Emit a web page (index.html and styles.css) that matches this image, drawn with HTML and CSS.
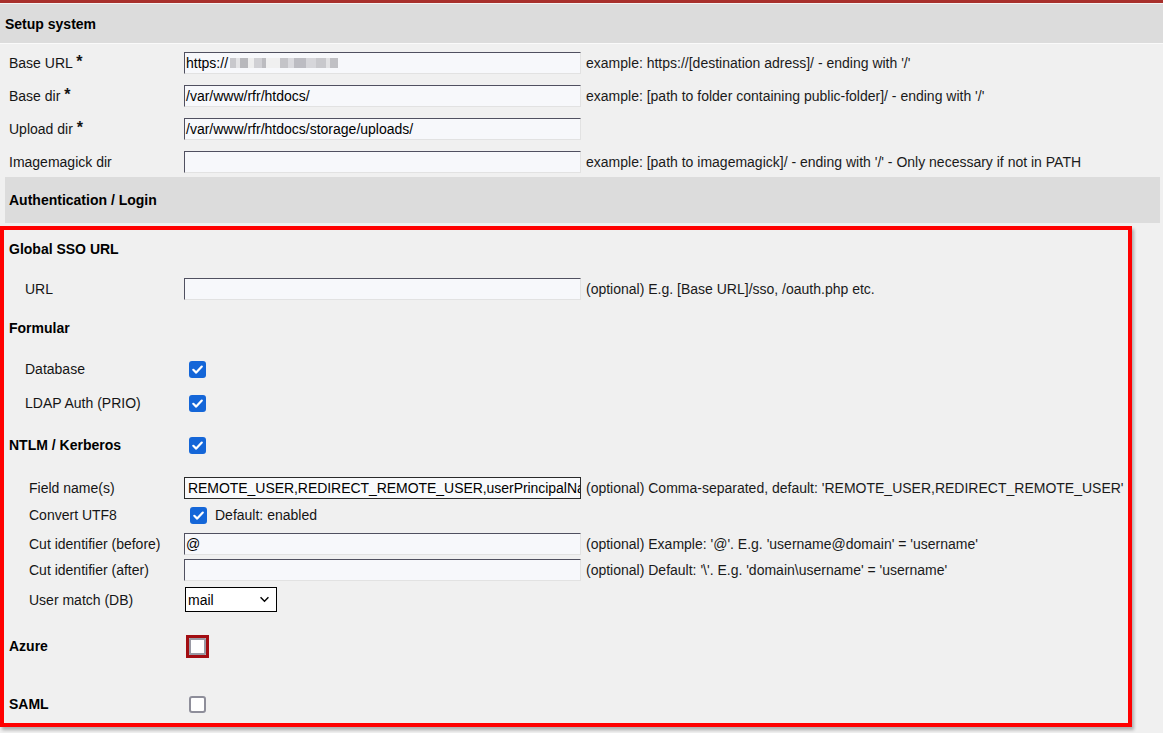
FILE: index.html
```html
<!DOCTYPE html>
<html>
<head>
<meta charset="utf-8">
<link rel="stylesheet" href="styles.css">
</head>
<body>
<div class="topline"></div>
<div class="section-head">Setup system</div>
<div class="settings">
  <div class="row">
    <div class="lbl">Base URL <b class="req">*</b></div>
    <div class="field">https://<span class="blur"></span></div>
    <div class="desc">example: https://[destination adress]/ - ending with '/'</div>
  </div>
  <div class="row">
    <div class="lbl">Base dir <b class="req">*</b></div>
    <div class="field">/var/www/rfr/htdocs/</div>
    <div class="desc">example: [path to folder containing public-folder]/ - ending with '/'</div>
  </div>
  <div class="row">
    <div class="lbl">Upload dir <b class="req">*</b></div>
    <div class="field">/var/www/rfr/htdocs/storage/uploads/</div>
  </div>
  <div class="row">
    <div class="lbl">Imagemagick dir</div>
    <div class="field"></div>
    <div class="desc">example: [path to imagemagick]/ - ending with '/' - Only necessary if not in PATH</div>
  </div>
</div>
<div class="band">Authentication / Login</div>
<div class="highlight">
  <div class="brow mt-7">
    <div class="blbl head">Global SSO URL</div>
  </div>
  <div class="brow mt-16">
    <div class="blbl sub">URL</div>
    <div class="field"></div>
    <div class="desc">(optional) E.g. [Base URL]/sso, /oauth.php etc.</div>
  </div>
  <div class="brow mt-15">
    <div class="blbl head">Formular</div>
  </div>
  <div class="brow mt-17">
    <div class="blbl sub">Database</div>
    <span class="cb on"><svg viewBox="0 0 17 17" width="17" height="17"><path d="M4.3 8.8 L7.2 11.6 L12.8 5.6" fill="none" stroke="#fff" stroke-width="2.2" stroke-linecap="round" stroke-linejoin="round"/></svg></span>
  </div>
  <div class="brow mt-10">
    <div class="blbl sub">LDAP Auth (PRIO)</div>
    <span class="cb on"><svg viewBox="0 0 17 17" width="17" height="17"><path d="M4.3 8.8 L7.2 11.6 L12.8 5.6" fill="none" stroke="#fff" stroke-width="2.2" stroke-linecap="round" stroke-linejoin="round"/></svg></span>
  </div>
  <div class="brow mt-18">
    <div class="blbl head">NTLM / Kerberos</div>
    <span class="cb on"><svg viewBox="0 0 17 17" width="17" height="17"><path d="M4.3 8.8 L7.2 11.6 L12.8 5.6" fill="none" stroke="#fff" stroke-width="2.2" stroke-linecap="round" stroke-linejoin="round"/></svg></span>
  </div>
  <div class="brow mt-19">
    <div class="blbl sub2">Field name(s)</div>
    <div class="field dark">REMOTE_USER,REDIRECT_REMOTE_USER,userPrincipalName</div>
    <div class="desc">(optional) Comma-separated, default: 'REMOTE_USER,REDIRECT_REMOTE_USER'</div>
  </div>
  <div class="brow mt-3">
    <div class="blbl sub2">Convert UTF8</div>
    <span class="cb on cb-utf"><svg viewBox="0 0 17 17" width="17" height="17"><path d="M4.3 8.8 L7.2 11.6 L12.8 5.6" fill="none" stroke="#fff" stroke-width="2.2" stroke-linecap="round" stroke-linejoin="round"/></svg></span>
    <span class="cb-text">Default: enabled</span>
  </div>
  <div class="brow mt-5">
    <div class="blbl sub2">Cut identifier (before)</div>
    <div class="field">@</div>
    <div class="desc">(optional) Example: '@'. E.g. 'username@domain' = 'username'</div>
  </div>
  <div class="brow mt-2">
    <div class="blbl sub2">Cut identifier (after)</div>
    <div class="field"></div>
    <div class="desc">(optional) Default: '\'. E.g. 'domain\username' = 'username'</div>
  </div>
  <div class="brow tall mt-5">
    <div class="blbl sub2">User match (DB)</div>
    <div class="select"><span>mail</span><svg viewBox="0 0 12 8" width="11" height="7"><path d="M1.5 1.5 L6 6 L10.5 1.5" fill="none" stroke="#000" stroke-width="1.6"/></svg></div>
  </div>
  <div class="brow mt-21 shift">
    <div class="blbl head">Azure</div>
    <span class="ring"><span class="cb off flat"></span></span>
  </div>
  <div class="brow mt-34">
    <div class="blbl head">SAML</div>
    <span class="cb off"></span>
  </div>
</div>
</body>
</html>
```
FILE: styles.css
```css
html, body {
  margin: 0;
  padding: 0;
}
body {
  background: #f0f0f0;
  font-family: "Liberation Sans", Arial, sans-serif;
  font-size: 14px;
  color: #151515;
  width: 1163px;
  height: 733px;
  overflow: hidden;
}
.topline {
  height: 3px;
  background: #a8302c;
  border-bottom: 1px solid #f4f4f4;
}
.section-head {
  height: 39px;
  background: #dcdcdc;
  border-bottom: 1px solid #fafafa;
  display: flex;
  align-items: center;
  padding-left: 5px;
  font-weight: bold;
  color: #000;
}
.settings {
  padding-top: 8px;
  display: flex;
  flex-direction: column;
  gap: 11px;
}
.row {
  display: flex;
  align-items: center;
  height: 22px;
}
.lbl {
  width: 175px;
  padding-left: 9px;
  white-space: nowrap;
}
.req {
  font-size: 16px;
  position: relative;
  top: -1px;
}
.field {
  box-sizing: border-box;
  width: 397px;
  height: 22px;
  background: #f7f8fb;
  border-top: 1px solid #505060;
  border-left: 1px solid #505060;
  border-right: 1px solid #e2e2e2;
  border-bottom: 1px solid #e2e2e2;
  padding-left: 1px;
  display: flex;
  align-items: center;
  white-space: nowrap;
  overflow: hidden;
  color: #000;
}
.field.dark {
  border: 1px solid #2a2a2a;
  padding-left: 3px;
  background: #f9fafc;
  letter-spacing: -0.05px;
}
.blur {
  display: inline-block;
  width: 108px;
  height: 10px;
  margin-left: 2px;
  background:
    linear-gradient(90deg,
      #c8c8cc 0 6px, #e4e4e6 6px 10px, #b8b8bc 10px 18px, #eeeeee 18px 24px,
      #d0d0d4 24px 32px, #bcbcc0 32px 36px, #f0f0f0 36px 50px,
      #c4c4c8 50px 58px, #dadade 58px 64px, #bcbcc2 64px 76px,
      #d6d6da 76px 86px, #c8c8cc 86px 96px, #e2e2e4 96px 100px, #c0c0c4 100px 108px);
}
.desc {
  margin-left: 5px;
  white-space: nowrap;
  color: #1a1a1a;
}
.band {
  margin: 4px 3px 0 5px;
  height: 46px;
  background: #dcdcdc;
  display: flex;
  align-items: center;
  padding-left: 4px;
  font-weight: bold;
  color: #000;
}
.highlight {
  margin-top: 3px;
  box-sizing: border-box;
  width: 1132px;
  height: 501px;
  border: 4px solid #ff0000;
  box-shadow: 2px 3px 3px rgba(0, 0, 0, 0.28);
  display: flex;
  flex-direction: column;
}
.brow {
  display: flex;
  align-items: center;
  height: 24px;
  flex: none;
}
.brow.tall {
  height: 25px;
}
.blbl {
  box-sizing: border-box;
  width: 180px;
  white-space: nowrap;
}
.blbl.head {
  padding-left: 5px;
  font-weight: bold;
  color: #000;
}
.blbl.sub {
  padding-left: 21px;
}
.blbl.sub2 {
  padding-left: 25px;
}
.mt-2 { margin-top: 2px; }
.mt-3 { margin-top: 3px; }
.mt-5 { margin-top: 5px; }
.mt-7 { margin-top: 7px; }
.mt-10 { margin-top: 10px; }
.mt-15 { margin-top: 15px; }
.mt-16 { margin-top: 16px; }
.mt-17 { margin-top: 17px; }
.mt-18 { margin-top: 18px; }
.mt-19 { margin-top: 19px; }
.mt-21 { margin-top: 21px; }
.mt-34 { margin-top: 34px; }
.shift { margin-top: 22px; }
.cb {
  box-sizing: border-box;
  width: 17px;
  height: 17px;
  border-radius: 3px;
  margin-left: 5px;
  display: inline-flex;
  flex: none;
}
.cb.on {
  background: #1466d8;
}
.cb.off {
  background: #fff;
  border: 2px solid #8e8e9a;
}
.ring {
  box-sizing: border-box;
  margin-left: 2px;
  width: 23px;
  height: 23px;
  border: 3px solid #a20d12;
  display: inline-flex;
  flex: none;
}
.cb.flat {
  margin-left: 0;
  border-radius: 1px;
  border-color: #9a9aa4;
}
.cb-utf {
  margin-left: 6px;
}
.cb-text {
  margin-left: 8px;
}
.select {
  box-sizing: border-box;
  margin-left: 1px;
  width: 92px;
  height: 25px;
  border: 1px solid #000;
  background: #fff;
  display: flex;
  align-items: center;
  justify-content: space-between;
  padding: 0 6px 0 2px;
  color: #000;
}
```
